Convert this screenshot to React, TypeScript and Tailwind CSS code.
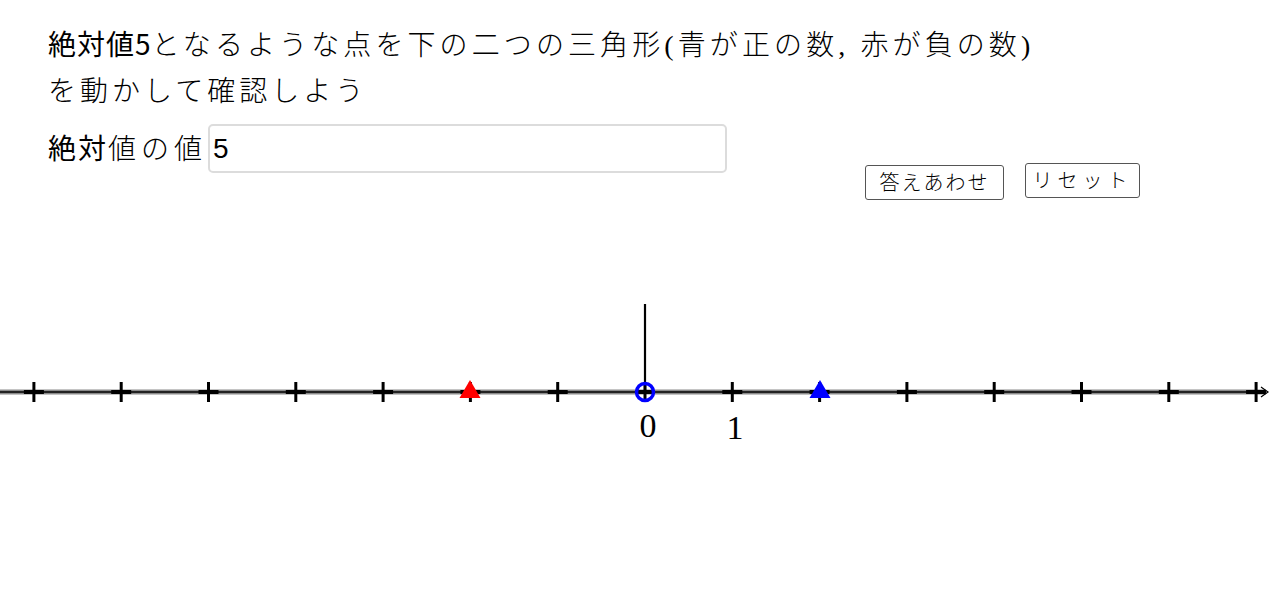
import React from "react";

const SANS = "font-['Noto_Sans_CJK_JP',sans-serif]";
const MIN = "font-['Liberation_Serif','Noto_Sans_CJK_JP',serif] font-light";

const UNIT = 87.3;
const ORIGIN = 645;
const AXIS_Y = 392;

// tick marks from -7 to 7
const TICKS = Array.from({ length: 15 }, (_, i) => i - 7);

function NumberLine() {
  return (
    <svg
      width={1271}
      height={381}
      viewBox="0 210 1271 381"
      className="block"
    >
      {/* axis */}
      <line x1={0} y1={AXIS_Y} x2={1266} y2={AXIS_Y} stroke="#8a8a8a" strokeWidth={5} />
      <line x1={0} y1={AXIS_Y} x2={1266} y2={AXIS_Y} stroke="#000" strokeWidth={1.6} />
      <path d="M1261 387 L1268 392 L1261 397" fill="none" stroke="#000" strokeWidth={1.2} />

      {TICKS.map((k) => {
        const x = ORIGIN + k * UNIT;
        return (
          <g key={k}>
            <line x1={x - 10} y1={AXIS_Y} x2={x + 10} y2={AXIS_Y} stroke="#000" strokeWidth={4} />
            <line x1={x} y1={382} x2={x} y2={402} stroke="#000" strokeWidth={3} />
          </g>
        );
      })}

      {/* vertical bar at zero */}
      <line x1={ORIGIN} y1={304} x2={ORIGIN} y2={AXIS_Y} stroke="#000" strokeWidth={2.2} />

      {/* origin point */}
      <circle cx={ORIGIN} cy={AXIS_Y} r={8.5} fill="none" stroke="#0000ff" strokeWidth={3.5} />

      {/* red: negative, blue: positive */}
      <polygon points="470,380 459.5,398 480.5,398" fill="#ff0000" />
      <polygon points="820,380 809.5,398 830.5,398" fill="#0000ff" />

      <text x={648} y={437} textAnchor="middle" fontFamily="Liberation Serif, serif" fontSize={34} fill="#000">
        0
      </text>
      <text x={735} y={439} textAnchor="middle" fontFamily="Liberation Serif, serif" fontSize={34} fill="#000">
        1
      </text>
    </svg>
  );
}

export default function App() {
  return (
    <div className="w-[1271px] h-[591px] bg-white overflow-hidden text-black">
      <div className="h-[210px] pl-[48px] pt-[20px]">
        <p className="text-[28px] leading-[46px] whitespace-nowrap">
          <span className={`${SANS} tracking-[1px]`}>絶対値5</span>
          <span className={`${MIN} tracking-[4.1px]`}>となるような点を下の二つの三角形(青が正の数, 赤が負の数)</span>
        </p>
        <p className={`${MIN} text-[28px] leading-[46px] tracking-[4px] whitespace-nowrap`}>
          を動かして確認しよう
        </p>

        <div className="flex items-start mt-[8px]">
          <div className="flex items-center">
            <span className="text-[28px] leading-[49px] whitespace-nowrap">
              <span className={`${SANS} tracking-[2px]`}>絶対</span>
              <span className={`${MIN} tracking-[5px]`}>値の値</span>
            </span>
            <div className="w-[519px] h-[49px] ml-[1px] rounded-[5px] border-2 border-[#dcdcdc] flex items-center pl-[3px]">
              <span className="font-['Liberation_Sans',sans-serif] text-[28px]">5</span>
            </div>
          </div>

          <div className="flex items-start gap-[21px] ml-[138px]">
            <button className={`${MIN} mt-[42px] w-[139px] h-[35px] rounded-[3px] border border-[#555] text-[20px] tracking-[2px] flex items-center justify-center bg-white`}>
              答えあわせ
            </button>
            <button className={`${MIN} mt-[40px] w-[115px] h-[35px] rounded-[3px] border border-[#555] text-[20px] tracking-[5px] flex items-center justify-center bg-white`}>
              リセット
            </button>
          </div>
        </div>
      </div>

      <NumberLine />
    </div>
  );
}
